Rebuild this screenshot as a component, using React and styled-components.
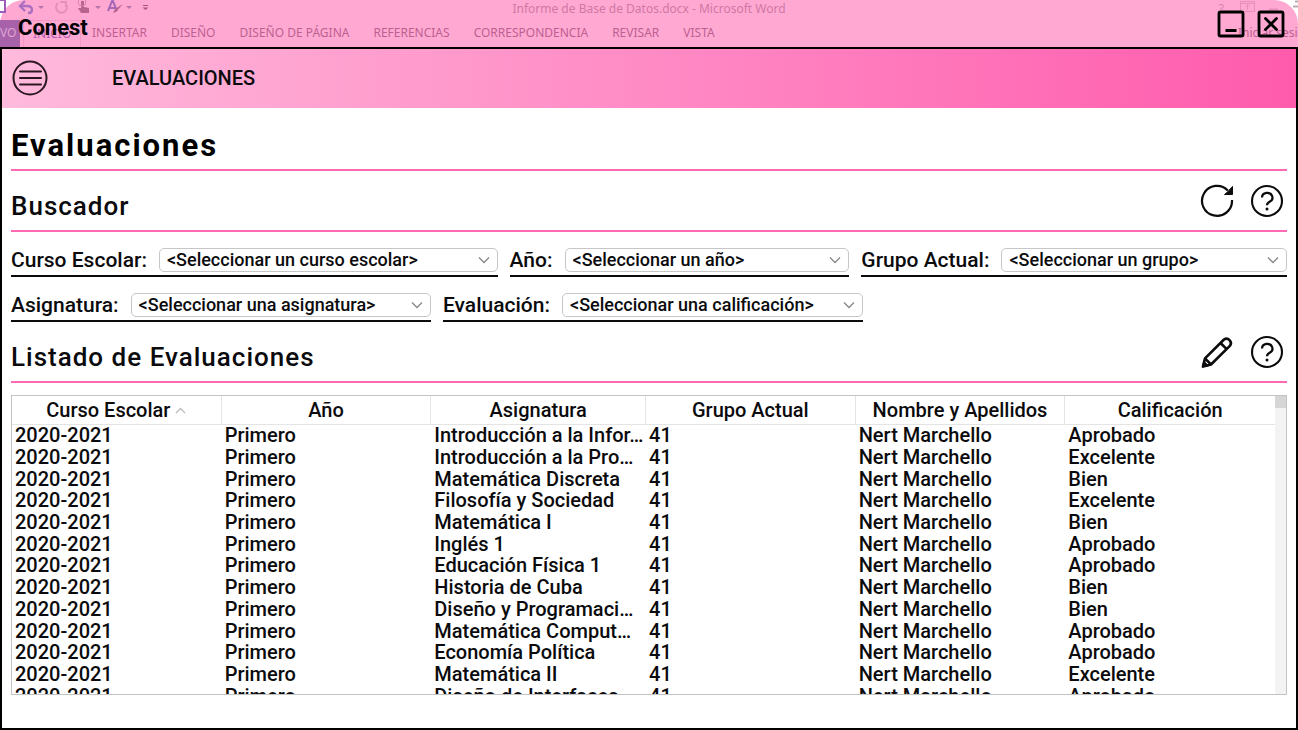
import React from "react";
import styled, { createGlobalStyle } from "styled-components";

const GlobalStyle = createGlobalStyle`
  *, *::before, *::after { box-sizing: border-box; }
  body { margin: 0; background: #fff; color: #0b0b0d; font-family: Roboto, "Liberation Sans", sans-serif; font-weight: 500; }
  h1, h2, p { margin: 0; }
  button { margin: 0; padding: 0; border: 0; background: none; color: inherit; font: inherit; cursor: pointer; }
  svg { display: block; flex: none; }
`;

const Shell = styled.div`
  display: flex;
  flex-direction: column;
  height: 100vh;
  min-height: 480px;
  overflow: hidden;
`;

/* The translucent title bar and the document window under it share one grid cell. */
const TopStack = styled.div`
  display: grid;
  grid-template: 47px / minmax(0, 1fr);
  flex: none;
  background: #fff;
  > * { grid-area: 1 / 1; }
`;

const Backdrop = styled.div`
  display: grid;
  grid-template-rows: 20px 27px;
  overflow: hidden;
  font-family: "Noto Sans", "Open Sans", sans-serif;
  font-weight: 400;
  font-size: 12px;
  white-space: nowrap;
  color: #bd5f91;
`;

const BackdropTop = styled.div`
  display: grid;
  grid-template-columns: 1fr auto 1fr;
  align-items: start;
  color: #cf77a5;
`;

const DocTitle = styled.span`
  line-height: 18px;
`;

const BackdropWindow = styled.div`
  display: flex;
  justify-content: flex-end;
  gap: 16px;
  line-height: 18px;
  color: #dd80af;
`;

const Ribbon = styled.div`
  display: flex;
  align-items: stretch;
  line-height: 26px;
`;

const FileTab = styled.span`
  width: 20px;
  background: #a862aa;
  color: #dfa3d4;
`;

const HomeTab = styled.span`
  width: 58px;
  margin-left: 3px;
  padding-left: 9px;
  border: 1px solid #f598c4;
  border-bottom: 0;
  color: #b35fae;
`;

const RibbonTabs = styled.span`
  display: flex;
  flex: 1;
  gap: 24px;
  padding-left: 11px;
`;

const SignIn = styled.span`
  width: 60px;
`;

const TitleBar = styled.header`
  display: flex;
  align-items: center;
  gap: 12px;
  padding: 0 13px 0 18px;
  z-index: 1;
`;

const BarFill = styled.div`
  background: #ffa9d2;
  border-radius: 24px 24px 0 0;
`;

const AppName = styled.p`
  flex: 1;
  padding-top: 8px;
  font-size: 22px;
  line-height: 28px;
  font-weight: 700;
  color: #000;
`;

const Frame = styled.div`
  display: flex;
  flex-direction: column;
  flex: 1;
  min-height: 0;
  border: 2px solid #000;
`;

const NavBar = styled.nav`
  display: flex;
  align-items: center;
  gap: 64px;
  flex: none;
  height: 59px;
  padding: 0 10px 2px;
  background: linear-gradient(90deg, #ffbadc, #ff5bad);
`;

const NavTitle = styled.span`
  font-size: 20px;
  line-height: 24px;
`;

const Main = styled.main`
  display: flex;
  flex-direction: column;
  flex: 1;
  min-height: 0;
  padding: 0 9px 33px;
`;

const PageTitle = styled.h1`
  flex: none;
  padding-top: 18px;
  height: 63px;
  border-bottom: 2px solid #ff69b4;
  font-size: 31px;
  line-height: 40px;
  font-weight: 700;
  letter-spacing: 2px;
  color: #000;
`;

const SectionHead = styled.div`
  display: flex;
  align-items: center;
  gap: 16px;
  flex: none;
  height: 61px;
  padding: 1px 3px 0 0;
  border-bottom: 2px solid #ff69b4;
`;

const SectionTitle = styled.h2`
  flex: 1;
  padding-top: 10px;
  font-size: 26px;
  line-height: 32px;
  font-weight: 500;
  letter-spacing: 1px;
`;

const Filters = styled.form`
  display: flex;
  flex-direction: column;
  gap: 16px;
  flex: none;
  padding-top: 16px;
`;

const FilterRow = styled.div`
  display: grid;
  grid-template-columns: ${(p) => p.$columns};
  gap: 12px;
`;

const Field = styled.div`
  display: flex;
  align-items: flex-start;
  gap: 12px;
  height: 29px;
  border-bottom: 2px solid #0b0b0d;
`;

const FieldLabel = styled.label`
  flex: none;
  font-size: 21px;
  line-height: 24px;
`;

const SelectBox = styled.div`
  display: grid;
  align-items: center;
  flex: 1;
  min-width: 0;
  > * { grid-area: 1 / 1; }
  > svg { justify-self: end; margin-right: 8px; pointer-events: none; }
`;

const Select = styled.select`
  appearance: none;
  width: 100%;
  height: 24px;
  padding: 0 28px 0 7px;
  border: 1px solid #c6c6c6;
  border-radius: 5px;
  background: #fff;
  color: #0b0b0d;
  font-family: inherit;
  font-size: 18px;
  font-weight: 500;
  line-height: 22px;
`;

const TableFrame = styled.div`
  display: flex;
  align-items: stretch;
  flex: 1;
  min-height: 0;
  margin-top: 12px;
  border: 1px solid #c3c3c3;
  overflow: hidden;
`;

const TableView = styled.div`
  flex: 1;
  min-width: 0;
  overflow: hidden;
`;

const Table = styled.table`
  width: 100%;
  height: 311px;
  table-layout: fixed;
  border-collapse: separate;
  border-spacing: 0;
  font-size: 20px;
`;

const HeadCell = styled.th`
  width: ${(p) => p.$width};
  height: 29px;
  padding: 0;
  border-right: 1px solid #e4e4e4;
  border-bottom: 1px solid #e4e4e4;
  font-weight: 500;
  line-height: 27px;
  white-space: nowrap;
  &:last-child { border-right: 0; }
  > span { display: flex; align-items: center; justify-content: center; gap: 5px; }
`;

const Cell = styled.td`
  padding: 0 0 0 3px;
  line-height: 21px;
  overflow-x: clip;
  text-overflow: ellipsis;
  white-space: nowrap;
`;

const Track = styled.div`
  flex: none;
  width: 11px;
  background: #f3f3f3;
`;

const Thumb = styled.div`
  height: 12px;
  background: #d6d6d6;
`;

const Line = ({ size = 34, width = 2, children, ...rest }) => (
  <svg width={size} height={size} viewBox="0 0 34 34" fill="none" stroke="#0b0b0d" strokeWidth={width} aria-hidden="true" {...rest}>
    {children}
  </svg>
);

const MenuIcon = () => (
  <Line size={36} width={2} viewBox="0 0 36 36" stroke="#2b1822">
    <circle cx="18" cy="18" r="16.5" />
    <path d="M8 11.500h21M8 18h21M8 24.500h21" strokeLinecap="round" />
  </Line>
);

const ReloadIcon = () => (
  <Line>
    <path d="M32 16A15 15 0 1 1 27.8 6.4" strokeWidth="2.2" />
    <path d="M32.5 2.5v8h-8l3-2.5z" fill="#0b0b0d" strokeWidth="1" />
  </Line>
);

const HelpIcon = () => (
  <Line>
    <circle cx="17" cy="17" r="15" strokeWidth="2.1" />
    <path d="M12 13.5a5.2 4.7 0 1 1 7.6 4.2c-1.9 1-2.6 1.7-2.6 3.6" strokeWidth="2.2" />
    <circle cx="17" cy="25" r="1.5" fill="#0b0b0d" stroke="none" />
  </Line>
);

const PencilIcon = () => (
  <Line>
    <path d="M3 31.5l2-8.2L24 4.5a4.4 4.4 0 0 1 6.1 6.1L11 29.5zM20.5 8l6.2 6.2M5 23.3l6 6.2" strokeWidth="2.6" strokeLinejoin="round" />
    <path d="M3 31.5l1-4.2 3.3 3.2z" fill="#0b0b0d" />
  </Line>
);

const MinimizeIcon = () => (
  <Line size={28} viewBox="0 0 28 28" stroke="#000">
    <rect x="2" y="2" width="24" height="24" rx="1.5" strokeWidth="2.8" />
    <path d="M8.5 20.5h11" strokeWidth="3" />
  </Line>
);

const CloseIcon = () => (
  <Line size={28} viewBox="0 0 28 28" stroke="#000">
    <rect x="2" y="2" width="24" height="24" rx="1.5" strokeWidth="2.8" />
    <path d="M8.5 8.5l11 11m0-11l-11 11" strokeWidth="2.8" strokeLinecap="round" />
  </Line>
);

const Chevron = () => (
  <svg width="12" height="8" viewBox="0 0 12 8" fill="none" stroke="#8a8a8a" strokeWidth="1.4" aria-hidden="true">
    <path d="M1 1.500l5 5 5-5" />
  </svg>
);

const SortMark = () => (
  <svg width="11" height="7" viewBox="0 0 11 7" fill="none" stroke="#bcbcbc" strokeWidth="1.3" aria-hidden="true">
    <path d="M1 6l4.500-4.500L10 6" />
  </svg>
);

const QuickTools = () => (
  <svg width="160" height="18" viewBox="0 0 160 18" fill="none" aria-hidden="true">
    <path d="M0 0h5v12H0" stroke="#9a5cb8" strokeWidth="2" />
    <path d="M0 2h3v6H0z" fill="#fff" />
    <path d="M25 1l-5 5 5 5M20 6h7q5 0 5 4q0 3-4 3" stroke="#ad70c0" strokeWidth="2.4" />
    <path d="M38 6h6l-3 3zM95 6h6l-3 3zM126 6h6l-3 3z" fill="#b574ac" />
    <path d="M65 3a5.500 5.500 0 1 1-7 0M60 2h6v5" stroke="#e391bb" strokeWidth="2" />
    <path d="M81 8V1h3v6l5 1v5h-8l-3-5z" fill="#b7658f" />
    <circle cx="82" cy="2" r="4" stroke="#d984b1" />
    <path d="M108 11l4.500-11 4.500 11M109.500 8h6" stroke="#a568b8" strokeWidth="2" />
    <path d="M123 4l-7 8-3 1 2-4z" fill="#b7658f" />
    <path d="M143 5.500h5" stroke="#a3577f" />
    <path d="M142.500 7.500h6l-3 2.500z" fill="#a3577f" />
  </svg>
);

const WindowMarks = () => (
  <svg width="58" height="13" viewBox="0 0 58 13" fill="none" stroke="#e58fba" aria-hidden="true">
    <path d="M.5 1.500h14v10H.5zM.5 3.500h14M7.500 10V5M5 7l2.500-2.500L10 7" />
    <path d="M29 9.500h9" strokeWidth="2" />
    <path d="M58 1.500h-3M58 6.500h-5" stroke="#b9a9b2" strokeWidth="2" />
  </svg>
);

const RIBBON = ["INSERTAR", "DISEÑO", "DISEÑO DE PÁGINA", "REFERENCIAS", "CORRESPONDENCIA", "REVISAR", "VISTA"];

const FILTERS = [
  {
    columns: "487fr 340fr 426fr",
    fields: [
      { id: "curso", label: "Curso Escolar:", hint: "<Seleccionar un curso escolar>" },
      { id: "anio", label: "Año:", hint: "<Seleccionar un año>" },
      { id: "grupo", label: "Grupo Actual:", hint: "<Seleccionar un grupo>" },
    ],
  },
  {
    columns: "420fr 420fr 412fr",
    fields: [
      { id: "asignatura", label: "Asignatura:", hint: "<Seleccionar una asignatura>" },
      { id: "evaluacion", label: "Evaluación:", hint: "<Seleccionar una calificación>" },
    ],
  },
];

const COLUMNS = [
  { name: "Curso Escolar" },
  { name: "Año" },
  { name: "Asignatura", width: "17%" },
  { name: "Grupo Actual" },
  { name: "Nombre y Apellidos" },
  { name: "Calificación" },
];

const ROWS = [
  ["Introducción a la Infor…", "Aprobado"],
  ["Introducción a la Pro…", "Excelente"],
  ["Matemática Discreta", "Bien"],
  ["Filosofía y Sociedad", "Excelente"],
  ["Matemática I", "Bien"],
  ["Inglés 1", "Aprobado"],
  ["Educación Física 1", "Aprobado"],
  ["Historia de Cuba", "Bien"],
  ["Diseño y Programaci…", "Bien"],
  ["Matemática Comput…", "Aprobado"],
  ["Economía Política", "Aprobado"],
  ["Matemática II", "Excelente"],
  ["Diseño de Interfaces", "Aprobado"],
];

export default function App() {
  return (
    <Shell>
      <GlobalStyle />
      <TopStack>
        <BarFill />
        <Backdrop aria-hidden="true">
          <BackdropTop>
            <QuickTools />
            <DocTitle>Informe de Base de Datos.docx - Microsoft Word</DocTitle>
            <BackdropWindow>
              <span>?</span>
              <WindowMarks />
            </BackdropWindow>
          </BackdropTop>
          <Ribbon>
            <FileTab>VO</FileTab>
            <HomeTab>INICIO</HomeTab>
            <RibbonTabs>
              {RIBBON.map((t) => <span key={t}>{t}</span>)}
            </RibbonTabs>
            <SignIn>Iniciar sesió</SignIn>
          </Ribbon>
        </Backdrop>
        <TitleBar>
          <AppName>Conest</AppName>
          <button aria-label="Minimizar"><MinimizeIcon /></button>
          <button aria-label="Cerrar"><CloseIcon /></button>
        </TitleBar>
      </TopStack>
      <Frame>
        <NavBar>
          <button aria-label="Menú"><MenuIcon /></button>
          <NavTitle>EVALUACIONES</NavTitle>
        </NavBar>
        <Main>
          <PageTitle>Evaluaciones</PageTitle>
          <SectionHead>
            <SectionTitle>Buscador</SectionTitle>
            <button aria-label="Recargar"><ReloadIcon /></button>
            <button aria-label="Ayuda"><HelpIcon /></button>
          </SectionHead>
          <Filters>
            {FILTERS.map((row) => (
              <FilterRow key={row.columns} $columns={row.columns}>
                {row.fields.map((f) => (
                  <Field key={f.id}>
                    <FieldLabel htmlFor={f.id}>{f.label}</FieldLabel>
                    <SelectBox>
                      <Select id={f.id}><option>{f.hint}</option></Select>
                      <Chevron />
                    </SelectBox>
                  </Field>
                ))}
              </FilterRow>
            ))}
          </Filters>
          <SectionHead>
            <SectionTitle>Listado de Evaluaciones</SectionTitle>
            <button aria-label="Editar"><PencilIcon /></button>
            <button aria-label="Ayuda"><HelpIcon /></button>
          </SectionHead>
          <TableFrame>
            <TableView>
              <Table>
                <thead>
                  <tr>
                    {COLUMNS.map((c, i) => (
                      <HeadCell key={c.name} scope="col" $width={c.width || "auto"}>
                        <span>{c.name}{i === 0 && <SortMark />}</span>
                      </HeadCell>
                    ))}
                  </tr>
                </thead>
                <tbody>
                  {ROWS.map(([subject, grade]) => (
                    <tr key={subject}>
                      <Cell>2020-2021</Cell>
                      <Cell>Primero</Cell>
                      <Cell>{subject}</Cell>
                      <Cell>41</Cell>
                      <Cell>Nert Marchello</Cell>
                      <Cell>{grade}</Cell>
                    </tr>
                  ))}
                </tbody>
              </Table>
            </TableView>
            <Track><Thumb /></Track>
          </TableFrame>
        </Main>
      </Frame>
    </Shell>
  );
}
